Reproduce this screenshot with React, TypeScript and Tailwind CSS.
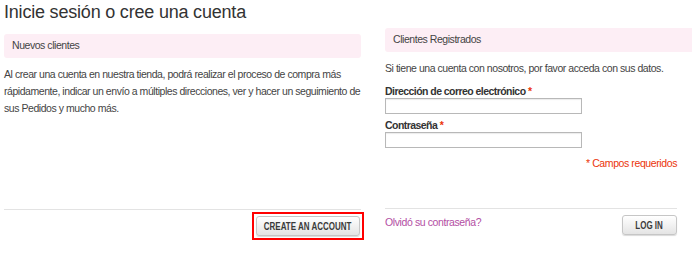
const font = { fontFamily: '"Liberation Sans", Arial, sans-serif' }

function GrayButton({ label, className }: { label: string; className?: string }) {
  return (
    <button
      type="button"
      className={
        'flex items-center justify-center rounded-[3px] border border-[#c6c6c6] bg-gradient-to-b from-white to-[#e4e4e4] text-[10.5px] font-bold uppercase leading-none tracking-normal text-[#3a3a3a] shadow-[0_1px_1px_rgba(0,0,0,0.15)] ' +
        (className ?? '')
      }
    >
      <span className="inline-block scale-x-[0.76] whitespace-nowrap">{label}</span>
    </button>
  )
}

export default function App() {
  return (
    <div
      className="h-[256px] w-[692px] overflow-hidden bg-white text-[10.5px] tracking-[-0.45px] text-[#444]"
      style={font}
    >
      <div className="flex items-start">
        {/* nuevos clientes */}
        <div className="ml-[4px] w-[357px]">
          <h1 className="h-[34px] pt-[1px] text-[18px] leading-[22px] tracking-[-0.2px] text-[#333]">
            Inicie sesión o cree una cuenta
          </h1>
          <div className="flex h-[24px] items-center rounded-[3px] bg-[#fdeef5] px-[8px] text-[#444]">
            Nuevos clientes
          </div>
          <p className="mt-[8px] h-[143px] leading-[17px]">
            Al crear una cuenta en nuestra tienda, podrá realizar el proceso de compra más
            <br />
            rápidamente, indicar un envío a múltiples direcciones, ver y hacer un seguimiento de
            <br />
            sus Pedidos y mucho más.
          </p>
          <div className="border-t border-[#e3e3e3]" />
          <div className="mt-[2px] flex justify-end">
            <div className="-mr-[3px] border-2 border-[#ff0000] p-[2px]">
              <GrayButton label="Create an Account" className="h-[20px] w-[104px]" />
            </div>
          </div>
        </div>

        {/* clientes registrados */}
        <div className="ml-[24px] flex-1 pt-[28px]">
          <div className="flex h-[24px] items-center rounded-l-[3px] bg-[#fdeef5] px-[8px] text-[#444]">
            Clientes Registrados
          </div>
          <div className="pr-[15px]">
            <p className="mt-[8px] whitespace-nowrap leading-[17px]">
              Si tiene una cuenta con nosotros, por favor acceda con sus datos.
            </p>
            <label className="mt-[7px] block font-bold leading-[14px] tracking-[-0.55px] text-[#333]">
              Dirección de correo electrónico <span className="text-[#eb340a]">*</span>
            </label>
            <input
              className="block h-[16px] w-[197px] border border-[#b8b8b8] bg-white px-[3px] text-[11px] shadow-[inset_0_1px_1px_rgba(0,0,0,0.08)] outline-none"
              defaultValue=""
            />
            <label className="mt-[4px] block font-bold leading-[14px] tracking-[-0.55px] text-[#333]">
              Contraseña <span className="text-[#eb340a]">*</span>
            </label>
            <input
              type="password"
              className="block h-[16px] w-[197px] border border-[#b8b8b8] bg-white px-[3px] text-[11px] shadow-[inset_0_1px_1px_rgba(0,0,0,0.08)] outline-none"
            />
            <p className="mt-[8px] text-right leading-[14px] tracking-[-0.4px] text-[#eb340a]">* Campos requeridos</p>
            <div className="mt-[38px] border-t border-[#e3e3e3]" />
            <div className="mt-[6px] flex items-start justify-between">
              <a href="#" className="leading-[14px] tracking-[-0.4px] text-[#b34ea3]">
                Olvidó su contraseña?
              </a>
              <GrayButton label="Log In" className="h-[20px] w-[55px]" />
            </div>
          </div>
        </div>
      </div>
    </div>
  )
}
